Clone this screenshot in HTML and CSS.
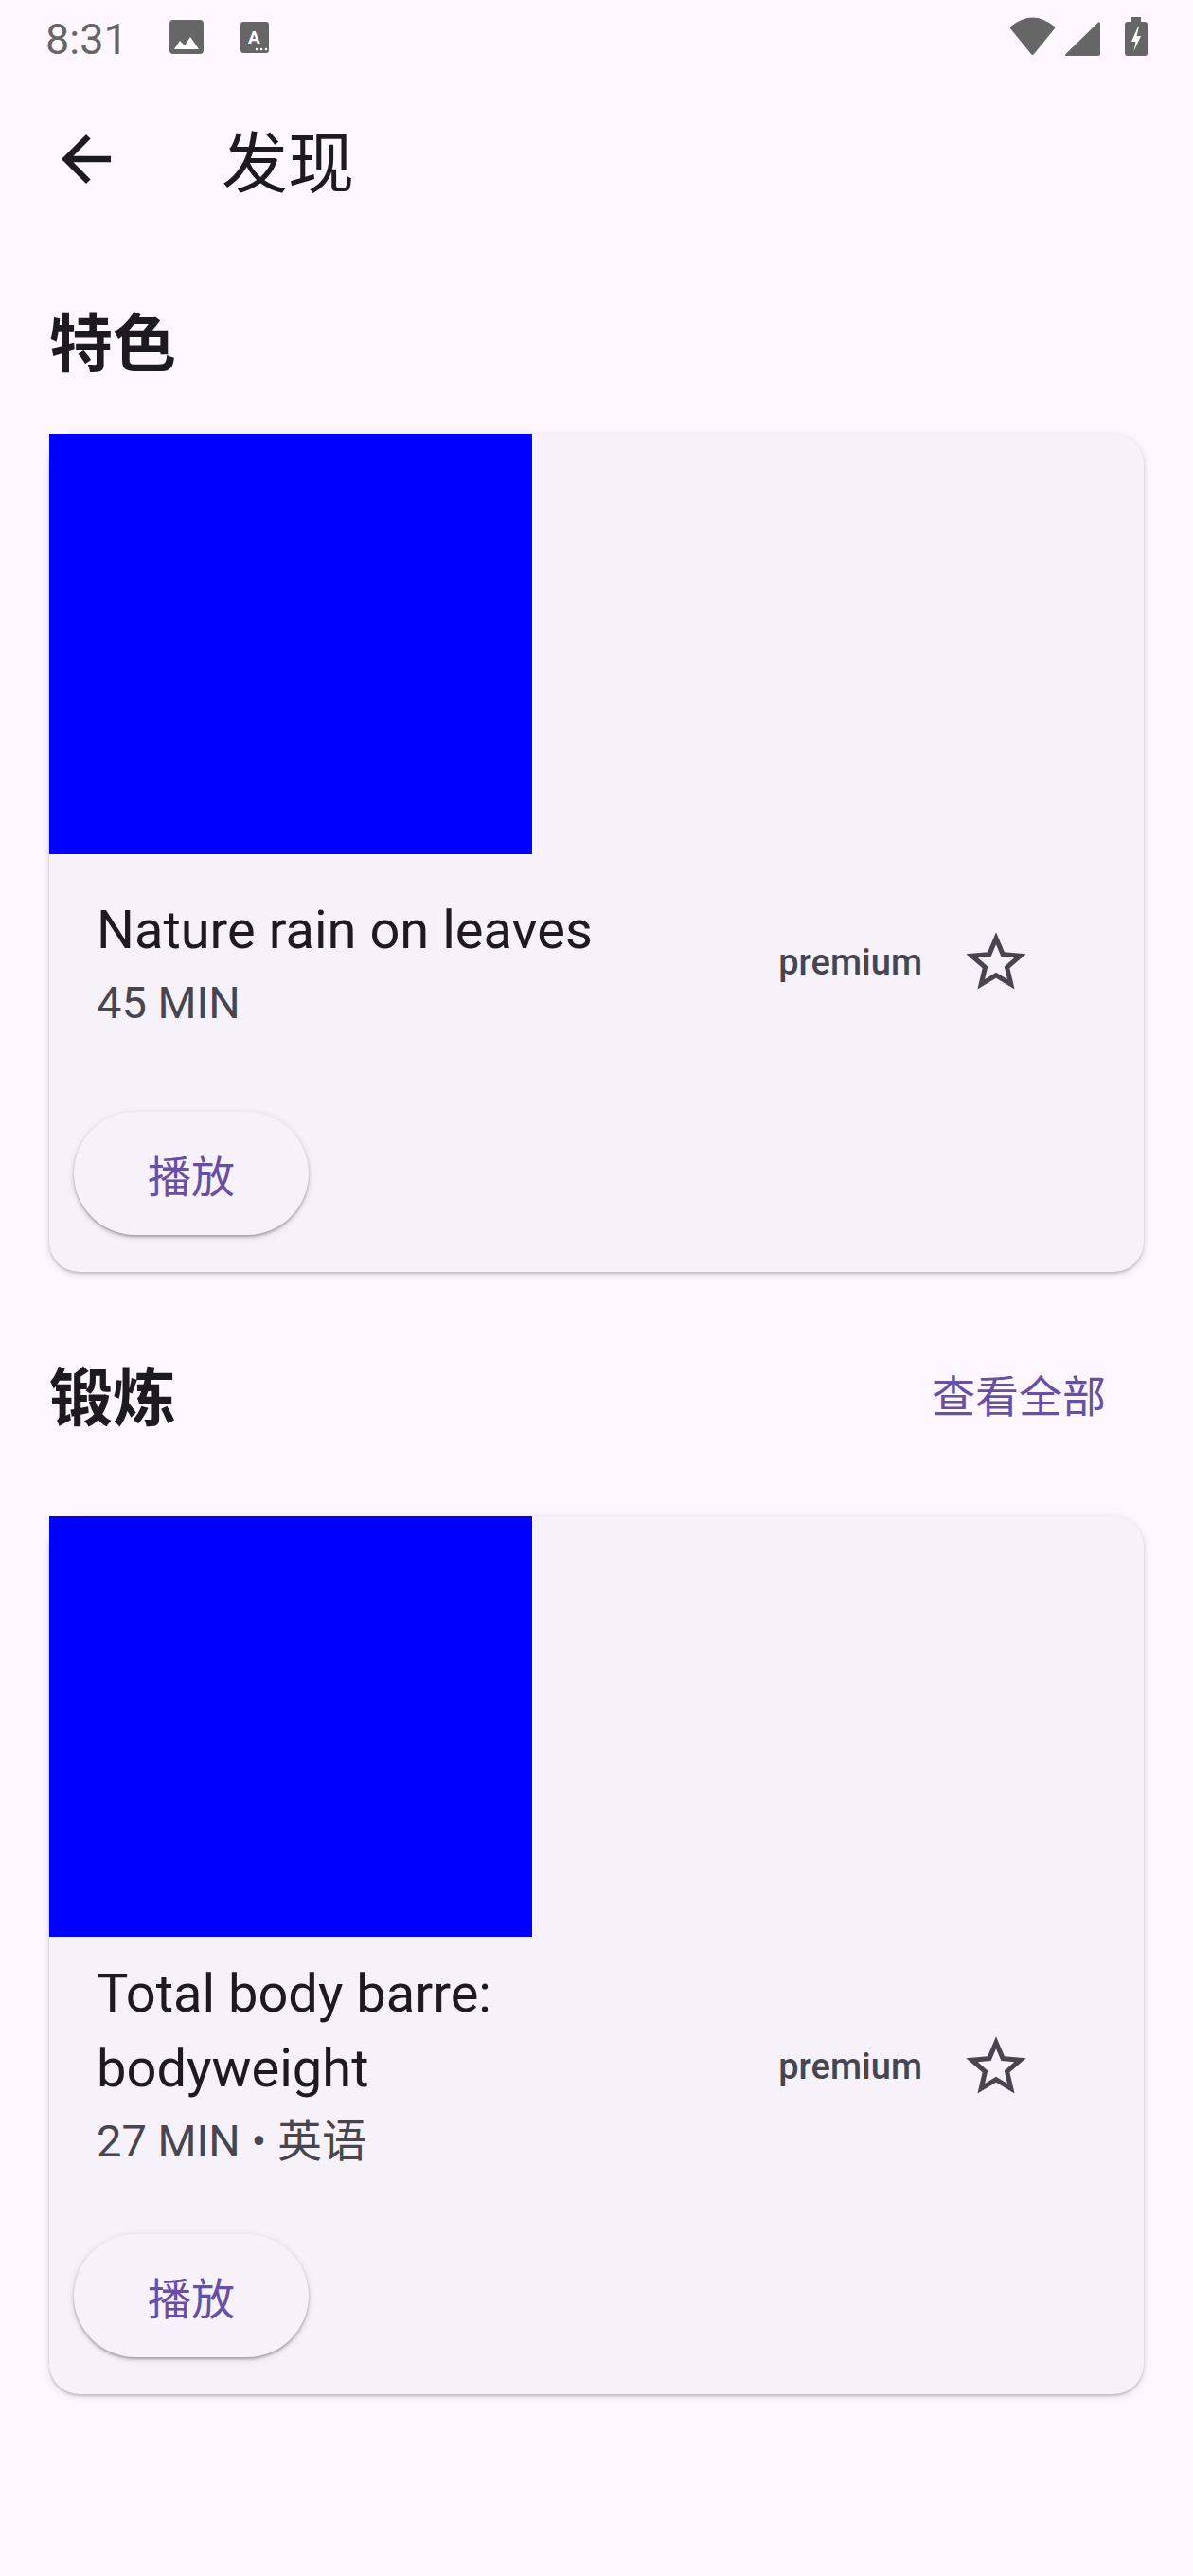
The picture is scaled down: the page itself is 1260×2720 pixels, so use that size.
FILE: index.html
```html
<!DOCTYPE html>
<html lang="zh">
<head>
<meta charset="utf-8">
<title>发现</title>
<link rel="stylesheet" href="styles.css">
</head>
<body>
<div class="screen">
  <div class="statusbar">
    <div class="sb-left">
      <span class="sb-time">8:31</span>
      <svg class="sb-img" width="36" height="36" viewBox="0 0 36 36"><rect x="0" y="0" width="36" height="36" rx="4" fill="#666"/><polygon points="5,31 11,22 16,27 22,18 31,31" fill="#fff"/></svg>
      <svg class="sb-a" width="30" height="33" viewBox="0 0 30 33"><rect x="0" y="0" width="30" height="33" rx="3" fill="#666"/><text x="14.5" y="23" text-anchor="middle" font-family="Roboto, sans-serif" font-weight="700" font-size="19" fill="#fff">A</text><circle cx="17" cy="29" r="1.3" fill="#fff"/><circle cx="22" cy="29" r="1.3" fill="#fff"/><circle cx="27" cy="29" r="1.3" fill="#fff"/></svg>
    </div>
    <div class="sb-right">
      <svg width="49" height="41" viewBox="0 0 49 41"><path d="M1.5 10 Q24.5 -9 47.5 10 Q48.5 11 47.8 12.3 L26 39 Q24.5 41 23 39 L1.2 12.3 Q0.5 11 1.5 10 Z" fill="#666"/></svg>
      <svg class="sb-signal" width="38" height="36" viewBox="0 0 38 36"><path d="M2 35 L36.5 1.5 Q37 1 37 2 L37 34 Q37 35 36 35 Z" fill="#666" stroke="#666" stroke-width="2" stroke-linejoin="round"/></svg>
      <svg class="sb-bat" width="24" height="41" viewBox="0 0 24 41"><rect x="7" y="0" width="10" height="6" fill="#666"/><rect x="0" y="5" width="24" height="36" rx="3" fill="#666"/><polygon points="14,10 7,26 11.5,26 9.5,36 17,20 12.5,20 15,10" fill="#fff"/></svg>
    </div>
  </div>

  <header class="appbar">
    <button class="icon-btn" aria-label="返回">
      <svg width="78" height="78" viewBox="0 0 24 24"><path d="M20 11H7.83l5.59-5.59L12 4l-8 8 8 8 1.41-1.41L7.83 13H20v-2z" fill="#1d1b20"/></svg>
    </button>
    <h1 class="appbar-title">发现</h1>
  </header>

  <main class="content">
    <section class="section section-first">
      <div class="section-head">
        <h2 class="section-title">特色</h2>
      </div>
      <article class="card">
        <div class="card-media"></div>
        <div class="tile tile-two">
          <div class="tile-text">
            <div class="tile-title">Nature rain on leaves</div>
            <div class="tile-sub">45 MIN</div>
          </div>
          <div class="tile-trailing">
            <span class="premium">premium</span>
            <svg class="star" width="76" height="76" viewBox="0 0 24 24"><path d="M22 9.24l-7.19-.62L12 2 9.19 8.63 2 9.24l5.46 4.73L5.82 21 12 17.27 18.18 21l-1.63-7.03L22 9.24zM12 15.4l-3.76 2.27 1-4.28-3.32-2.88 4.38-.38L12 6.1l1.71 4.04 4.38.38-3.32 2.88 1 4.28L12 15.4z" fill="#49454f"/></svg>
          </div>
        </div>
        <div class="card-actions">
          <button class="play-btn">播放</button>
        </div>
      </article>
    </section>

    <section class="section">
      <div class="section-head">
        <h2 class="section-title">锻炼</h2>
        <button class="text-btn">查看全部</button>
      </div>
      <article class="card">
        <div class="card-media"></div>
        <div class="tile">
          <div class="tile-text">
            <div class="tile-title">Total body barre: bodyweight</div>
            <div class="tile-sub">27 MIN • 英语</div>
          </div>
          <div class="tile-trailing">
            <span class="premium">premium</span>
            <svg class="star" width="76" height="76" viewBox="0 0 24 24"><path d="M22 9.24l-7.19-.62L12 2 9.19 8.63 2 9.24l5.46 4.73L5.82 21 12 17.27 18.18 21l-1.63-7.03L22 9.24zM12 15.4l-3.76 2.27 1-4.28-3.32-2.88 4.38-.38L12 6.1l1.71 4.04 4.38.38-3.32 2.88 1 4.28L12 15.4z" fill="#49454f"/></svg>
          </div>
        </div>
        <div class="card-actions">
          <button class="play-btn">播放</button>
        </div>
      </article>
    </section>
  </main>

  <div class="nav-area"></div>
</div>
</body>
</html>
```
FILE: styles.css
```css
* { box-sizing: border-box; }

html, body {
  margin: 0;
  padding: 0;
  background: #fef7ff;
}

body {
  font-family: Roboto, "Noto Sans CJK SC", sans-serif;
  color: #1d1b20;
}

.screen {
  width: 1260px;
  height: 2720px;
  display: flex;
  flex-direction: column;
  overflow: hidden;
  background: #fef7ff;
}

/* status bar */
.statusbar {
  height: 84px;
  flex: none;
  display: flex;
  align-items: center;
  justify-content: space-between;
  padding: 0 48px;
}

.sb-left {
  display: flex;
  align-items: center;
}

.sb-time {
  font-family: Roboto, sans-serif;
  font-size: 45px;
  line-height: 44px;
  color: #666;
  margin-right: 44px;
}

.sb-img {
  margin-bottom: 6px;
  margin-right: 39px;
}

.sb-a {
  margin-bottom: 6px;
}

.sb-right {
  display: flex;
  align-items: flex-end;
  margin-bottom: 8px;
}

.sb-signal { margin-left: 9px; }
.sb-bat { margin-left: 26px; }

/* app bar */
.appbar {
  height: 168px;
  flex: none;
  display: flex;
  align-items: center;
  padding-left: 52px;
}

.icon-btn {
  border: 0;
  background: transparent;
  padding: 0;
  width: 78px;
  height: 78px;
  display: flex;
}

.appbar-title {
  margin: 0 0 0 104px;
  font-family: "Noto Sans CJK SC", sans-serif;
  font-weight: 400;
  font-size: 70px;
  line-height: 1;
  color: #1d1b20;
}

/* content */
.content {
  flex: none;
  height: 2531px;
  overflow: hidden;
}

.section {
  padding-top: 62px;
}

.section-first {
  padding-top: 70px;
}

.section-head {
  display: flex;
  align-items: center;
  justify-content: space-between;
  padding-left: 52px;
  padding-right: 52px;
  margin-bottom: 64px;
}

.section-title {
  margin: 0;
  font-family: "Noto Sans CJK SC", sans-serif;
  font-weight: 700;
  font-size: 67px;
  line-height: 72px;
  color: #1d1b20;
}

.text-btn {
  height: 132px;
  border: 0;
  background: transparent;
  padding: 0 40px 0 32px;
  font-family: "Noto Sans CJK SC", sans-serif;
  font-size: 46px;
  line-height: 1;
  color: #6750a4;
}

/* card */
.card {
  margin: 0 52px;
  background: #f7f2fa;
  border-radius: 32px;
  box-shadow: 0 2px 3px rgba(0, 0, 0, 0.2), 0 2px 8px 2px rgba(0, 0, 0, 0.07);
}

.card-media {
  width: 510px;
  height: 444px;
  background: #0000ff;
}

.tile {
  display: flex;
  align-items: center;
  padding: 21px 118px 0 50px;
}

.tile-two {
  padding-top: 41px;
  padding-bottom: 17px;
}

.tile-text {
  flex: 1;
  min-width: 0;
}

.tile-title {
  font-size: 56px;
  line-height: 79px;
  color: #1d1b20;
}

.tile-sub {
  font-size: 47px;
  line-height: 73px;
  color: #49454f;
}

.tile-trailing {
  flex: none;
  display: flex;
  align-items: center;
  margin-left: 80px;
}

.tile-two .tile-trailing {
  margin-bottom: 6px;
}

.premium {
  font-family: Roboto, sans-serif;
  font-weight: 500;
  font-size: 38px;
  line-height: 52px;
  color: #49454f;
  margin-right: 40px;
}

.star {
  display: block;
}

.card-actions {
  padding: 62px 0 39px 26px;
}

.play-btn {
  width: 248px;
  height: 130px;
  border: 0;
  border-radius: 65px;
  background: #f7f2fa;
  box-shadow: 0 2px 3px rgba(0, 0, 0, 0.28), 0 2px 7px 1px rgba(0, 0, 0, 0.1);
  font-family: "Noto Sans CJK SC", sans-serif;
  font-size: 46px;
  line-height: 1;
  color: #6750a4;
  padding: 0;
}

.nav-area {
  flex: 1;
  background: #fdf8fd;
}
```
